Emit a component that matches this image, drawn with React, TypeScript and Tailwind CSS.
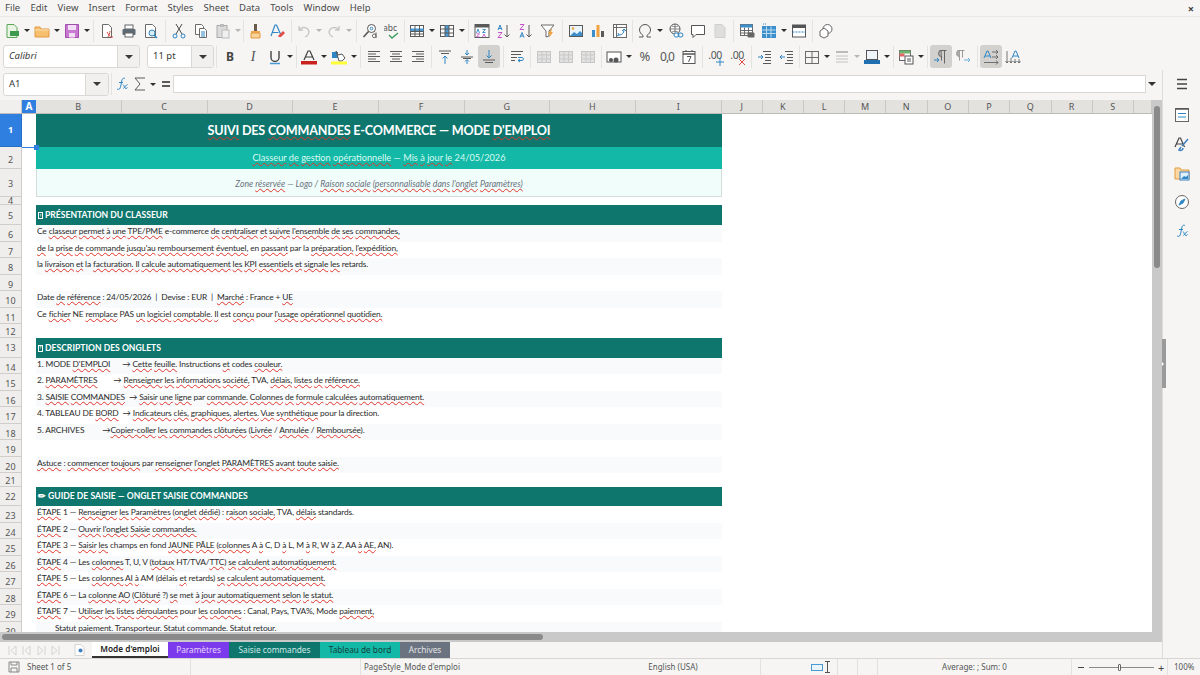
import React from "react";

const W = (s: string) => {
  const parts = s.split(/(\{[^}]*\})/g);
  return (
    <span className="whitespace-pre">
      {parts.map((p, i) =>
        p.startsWith("{") ? (
          <span key={i} className="underline decoration-wavy decoration-[#e0352b] decoration-[1px] [text-underline-offset:1px] [text-decoration-skip-ink:none]">
            {p.slice(1, -1)}
          </span>
        ) : (
          <React.Fragment key={i}>{p}</React.Fragment>
        )
      )}
    </span>
  );
};

const S = ({ children, active }: { children: React.ReactNode; active?: boolean }) => (
  <div className={"flex h-[23px] w-[22px] shrink-0 items-center justify-center rounded-[3px] " + (active ? "bg-[#d3d1cd]" : "")}>
    <svg width="16" height="16" viewBox="0 0 16 16" fill="none" strokeWidth="1">
      {children}
    </svg>
  </div>
);
const Arrow = ({ off }: { off?: boolean }) => (
  <div className="flex h-[23px] w-[8px] shrink-0 items-center justify-center">
    <div className={"h-0 w-0 border-x-[3px] border-t-[3px] border-x-transparent " + (off ? "border-t-[#b5b5b5]" : "border-t-[#2e2e2e]")} />
  </div>
);
const Sep = ({ w }: { w: string }) => (
  <div className={"flex h-[23px] shrink-0 items-center justify-center " + w}>
    <div className="h-[22px] w-px bg-[#e4e3e0]" />
  </div>
);
const G = "#5a5a5a";
const Lines = ({ rows }: { rows: [number, number][] }) => (
  <>
    {rows.map(([a, b], i) => (
      <path key={i} d={`M${a} ${2.5 + i * 2.5}H${b}`} stroke={G} />
    ))}
  </>
);
const Menu = () => (
  <div className="flex h-[17px] items-center border-b border-[#e9e8e5] pl-[5px] pr-[6px] text-[9.5px] text-[#4a4a4a]">
    <div className="flex gap-[10.2px]">
      {["File", "Edit", "View", "Insert", "Format", "Styles", "Sheet", "Data", "Tools", "Window", "Help"].map((m) => (
        <span key={m}>{m}</span>
      ))}
    </div>
    <span className="ml-auto text-[11px] font-bold leading-none text-[#444]">×</span>
  </div>
);

const Toolbar1 = () => (
  <div className="flex h-[26px] items-center pl-px pt-px">
    <S><path d="M3 1.5h7l3 3v10H3z" fill="#e9f4e3" stroke="#5da55a" /><rect x="6" y="8" width="9" height="5" fill="#3d9a4d" /></S>
    <Arrow />
    <S><path d="M1 4h5l1 2h8v8H1z" fill="#f7c06f" stroke="#e09b3f" /><path d="M1 7h14" stroke="#fbe0b5" /></S>
    <Arrow />
    <S><path d="M1.5 1.5h13v13h-13z" fill="#c77bd0" stroke="#a24dae" /><rect x="4" y="2" width="8" height="5" fill="#f3dff5" /><rect x="5" y="10" width="6" height="4.5" fill="#f3dff5" /></S>
    <Arrow />
    <Sep w="w-[5px]" />
    <S><path d="M3.5 1.5h6l3 3v10h-9z" fill="#fff" stroke="#6a6a6a" /><path d="M8 9c3 5 3 5 6 5M9 14c1-2 2-4 2-6" stroke="#d6493f" /></S>
    <S><rect x="4" y="2" width="8" height="4" fill="#fff" stroke="#666" /><rect x="1.5" y="6" width="13" height="6" rx="1" fill="#5e6a73" /><rect x="4" y="10" width="8" height="4" fill="#fff" stroke="#666" /></S>
    <S><path d="M2.5 1.5h7l3 3v10h-10z" fill="#fff" stroke="#6a6a6a" /><circle cx="9" cy="10" r="3" fill="#d9ecf7" stroke="#2f86c5" /><path d="M11 12l3 3" stroke="#2f86c5" strokeWidth="1.5" /></S>
    <Sep w="w-[6px]" />
    <S><path d="M5 1l6 10M11 1L5 11" stroke="#4b4b4b" /><circle cx="4" cy="13" r="2" stroke="#2f86c5" /><circle cx="12" cy="13" r="2" stroke="#2f86c5" /></S>
    <S><path d="M2.5 1.5h6l2 2v8h-8z" fill="#fff" stroke="#6a6a6a" /><path d="M6.5 5.5h5l2 2v7h-7z" fill="#fff" stroke="#6a6a6a" /><path d="M8 9h4M8 11h4M8 13h4" stroke="#2f86c5" /></S>
    <S><rect x="2" y="2.5" width="10" height="12" fill="#dcdcdc" stroke="#aaa" /><rect x="5" y="1" width="4" height="3" fill="#bbb" /><rect x="7" y="7" width="7" height="8" fill="#efefef" stroke="#bbb" /></S>
    <Arrow off />
    <Sep w="w-[3px]" />
    <S><rect x="6" y="1" width="3" height="7" fill="#6b5a4a" /><rect x="3" y="8" width="9" height="2" fill="#f0a94e" /><path d="M3 10h9v5H3z" fill="#f9d39a" stroke="#e39a3e" /></S>
    <S><path d="M1 13L5 2h1.500l4 9M2.500 9.500h6" stroke="#2f86c5" strokeWidth="1.200" /><path d="M8 13l5-5 2 2-4 4H9z" fill="#e14b45" /></S>
    <Sep w="w-[4px]" />
    <S><path d="M3 3v4h4M3 7c3-4 9-3 10 2 0 2-2 4-4 5" stroke="#c6c6c6" strokeWidth="1.3" /></S>
    <Arrow off />
    <S><path d="M13 3v4H9M13 7c-3-4-9-3-10 2 0 2 2 4 4 5" stroke="#c6c6c6" strokeWidth="1.3" /></S>
    <Arrow off />
    <Sep w="w-[6px]" />
    <S><circle cx="9.500" cy="5.500" r="4" fill="#fff" stroke="#555" /><path d="M6.500 8.500L1.500 14" stroke="#555" strokeWidth="1.600" /><circle cx="9.500" cy="5.500" r="1.300" stroke="#2f86c5" /><path d="M14 9.500V15M14 12.500a1.800 1.800 0 10-.1 1" stroke="#555" /></S>
    <S><text x="-1" y="8" fontSize="8.5" fill="#555" stroke="none" fontFamily="Noto Sans">abc</text><path d="M5 12l3 3 6-5" stroke="#3a9e5d" strokeWidth="1.3" /></S>
    <Sep w="w-[3px]" />
    <S><rect x="1.5" y="2.5" width="13" height="11" fill="#fff" stroke="#5a5a5a" /><rect x="1.5" y="5.5" width="13" height="3" fill="#4a9ad4" /><path d="M1.5 8.5h13M1.5 11h13M6 2.5v11M10.5 2.5v11" stroke="#5a5a5a" /></S>
    <Arrow />
    <S><rect x="1.5" y="2.5" width="13" height="11" fill="#fff" stroke="#5a5a5a" /><rect x="6" y="2.5" width="4" height="11" fill="#4a9ad4" /><path d="M1.5 6h13M1.5 10h13M6 2.5v11M10 2.5v11" stroke="#5a5a5a" /></S>
    <Arrow />
    <Sep w="w-[5px]" />
    <S><rect x="1" y="1.5" width="14" height="13" fill="#fff" stroke="#5a5a5a" /><rect x="1" y="1.5" width="14" height="3" fill="#5a5a5a" /><path d="M2.500 10l1.500-4 1.500 4M8.500 6.500h3l-3 3h3" stroke="#2f86c5" strokeWidth="0.9" /><path d="M2.500 10.800h3l-3 3h3M8.500 14l1.500-3 1.500 3" stroke="#c354c9" strokeWidth="0.9" /></S>
    <S><path d="M2 7l2-5 2 5M2.800 5.500h2.400" stroke="#2f86c5" /><path d="M2 9.500h4l-4 5h4" stroke="#c354c9" /><path d="M11 2v12M8.500 11.500L11 14l2.500-2.500" stroke="#5a5a5a" /></S>
    <S><path d="M2 1.500h4l-4 5h4" stroke="#c354c9" /><path d="M2 14.500l2-5 2 5M2.800 13h2.400" stroke="#2f86c5" /><path d="M11 2v12M8.500 11.500L11 14l2.500-2.500" stroke="#5a5a5a" /></S>
    <S><path d="M1 2h13L9 8v5l-3 1V8z" fill="#fff" stroke="#6a6a6a" /><path d="M11 6l-3 5h2l-1 4 4-6h-2l1-3z" fill="#f0a23e" /></S>
    <Sep w="w-[6px]" />
    <S><rect x="1.5" y="2.5" width="13" height="11" fill="#eaf4fb" stroke="#5a5a5a" /><circle cx="5" cy="5.5" r="1.3" fill="#f0a23e" /><path d="M2 13l4-4 3 2 3-3 2 2v3z" fill="#3d8fcc" /></S>
    <S><rect x="2" y="7" width="3" height="7" fill="#3d8fcc" /><rect x="6.5" y="2" width="3" height="12" fill="#f0a23e" /><rect x="11" y="8" width="3" height="6" fill="#5a5a5a" /></S>
    <S><rect x="1.5" y="1.5" width="13" height="13" fill="#fff" stroke="#6a6a6a" /><path d="M1.5 4.5h13M4.5 1.5v13" stroke="#6a6a6a" /><path d="M7 12c3 0 5-2 5-5M10 8l2-2 2 2M6 10l1 2-2 1" stroke="#2f86c5" /></S>
    <Sep w="w-[3px]" />
    <S><path d="M2 14h4v-1.5C4 11 2.5 9 2.5 7a5.500 5.500 0 0111 0c0 2-1.500 4-3.500 5.500V14h4" stroke="#555" /></S>
    <Arrow />
    <div className="w-px shrink-0" />
    <S><circle cx="7" cy="6" r="5" fill="#fff" stroke="#555" /><path d="M2 6h10M7 1v10M4 3c2 1 4 1 6 0M4 9c2-1 4-1 6 0" stroke="#555" strokeWidth="0.7" /><rect x="6" y="10" width="5" height="4" rx="2" fill="#fff" stroke="#2f86c5" /><rect x="10" y="10" width="5" height="4" rx="2" stroke="#2f86c5" /></S>
    <S><path d="M1.500 2.500h13v9H6l-3 3v-3H1.500z" fill="#fff" stroke="#555" /></S>
    <S><path d="M3 1.500h7l3 3v10H3z" fill="#dedede" stroke="#cfcfcf" /></S>
    <Sep w="w-[5px]" />
    <S><rect x="1.500" y="1.500" width="12" height="11" fill="#fff" stroke="#6a6a6a" /><rect x="1.500" y="1.500" width="12" height="3" fill="#3d8fcc" /><path d="M1.500 7.500h12M1.500 10h12M5.500 4.500v8M9.500 4.500v8" stroke="#6a6a6a" /><rect x="8.500" y="9.500" width="7" height="5" rx="1" fill="#666" /></S>
    <S><rect x="1.500" y="3.500" width="13" height="11" fill="#3d8fcc" stroke="#3d8fcc" /><path d="M1.500 7h13M1.500 10.500h13M5.500 3.500v11M10 3.500v11" stroke="#bcdcf2" /><path d="M2 1h3" stroke="#2f86c5" strokeDasharray="1 1" /></S>
    <Arrow />
    <S><rect x="1.500" y="2" width="13" height="12" fill="#fff" stroke="#555" /><rect x="1.500" y="2" width="13" height="3" fill="#555" /><path d="M1.500 9h13" stroke="#2f86c5" strokeDasharray="2 1" /></S>
    <Sep w="w-[5px]" />
    <S><circle cx="9.500" cy="6" r="4.500" fill="#fff" stroke="#666" /><path d="M2 8l4-3 4 3v5l-4 2-4-2z" fill="#fff" stroke="#666" /></S>
  </div>
);

const Combo = ({ w, a, italic, children }: { w: string; a: string; italic?: boolean; children: React.ReactNode }) => (
  <div className="flex h-[23px] shrink-0 overflow-hidden rounded-[3px] border border-[#d9d8d5] bg-white">
    <div className={"flex items-center pl-[5px] text-[9.5px] text-[#3a3a3a] " + w + (italic ? " italic" : "")}>{children}</div>
    <div className={"flex items-center justify-center border-l border-[#d9d8d5] bg-[#f1f0ee] " + a}>
      <div className="h-0 w-0 border-x-[4px] border-t-[4px] border-x-transparent border-t-[#3a3a3a]" />
    </div>
  </div>
);

const Toolbar2 = () => (
  <div className="flex h-[27px] items-center pl-[3px]">
    <Combo w="w-[113px]" a="w-[22px]" italic>Calibri</Combo>
    <div className="w-[7px] shrink-0" />
    <Combo w="w-[43px]" a="w-[22px]">11 pt</Combo>
    <Sep w="w-[5px]" />
    <div className="flex h-[23px] w-[22px] shrink-0 items-center justify-center text-[12px] font-bold leading-none text-[#444]">B</div>
    <div className="w-px shrink-0" />
    <div className="flex h-[23px] w-[22px] shrink-0 items-center justify-center font-['Liberation_Serif',serif] text-[14px] italic leading-none text-[#555]">I</div>
    <S><path d="M4 2v6.500a4 4 0 008 0V2" stroke="#444" strokeWidth="1.4" /><path d="M3 14.500h10" stroke="#4a9ad4" strokeWidth="1.500" /></S>
    <Arrow />
    <Sep w="w-[4px]" />
    <S><path d="M3 11l4-9h2l4 9M4.500 8h7" stroke="#3f3f3f" strokeWidth="1.200" /><rect x="0" y="12" width="16" height="3.500" fill="#c9211e" /></S>
    <Arrow />
    <S><path d="M1 3h6v6H1z" fill="#2f86c5" /><path d="M5 2l2 4 4-1 3 4-3 3H8z" fill="#fff" stroke="#555" /><rect x="0" y="12.500" width="16" height="3" fill="#ffff38" /></S>
    <Arrow />
    <Sep w="w-[5px]" />
    <S><Lines rows={[[2, 14], [2, 10], [2, 14], [2, 10], [2, 14]]} /></S>
    <S><Lines rows={[[2, 14], [4, 12], [2, 14], [4, 12], [2, 14]]} /></S>
    <S><Lines rows={[[2, 14], [6, 14], [2, 14], [6, 14], [2, 14]]} /></S>
    <Sep w="w-[5px]" />
    <S><path d="M2 2h12M4 4.500h8" stroke={G} /><path d="M8 15V7M5.500 9.500L8 7l2.500 2.500" stroke="#2f86c5" /></S>
    <S><path d="M2 8h12M4 9.500h8" stroke={G} /><path d="M8 1v5M6 4l2 2 2-2M8 15v-4M6 12.500l2-2 2 2" stroke="#2f86c5" /></S>
    <S active><path d="M8 1v8M5.500 6.500L8 9l2.500-2.500" stroke="#2f86c5" /><path d="M2 11h12M4 13.500h8" stroke={G} /></S>
    <Sep w="w-[6px]" />
    <S><path d="M2 2.500h12M2 5.500h10M2 8.500h6M2 11.500h4" stroke={G} /><path d="M9 8.500h4.500c1 0 1 3 0 3H9M11 10l-2 1.500 2 1.500" stroke="#2f86c5" /></S>
    <Sep w="w-[5px]" />
    {[0, 1, 2].map((i) => (
      <S key={i}><rect x="1.500" y="2.500" width="13" height="11" fill="#e2e2e2" stroke="#c6c6c6" /><path d="M1.500 6h13M1.500 10h13M6 2.500v11M10.500 2.500v11" stroke="#c9c9c9" /></S>
    ))}
    <Sep w="w-[4px]" />
    <S><rect x="1" y="3" width="14" height="10" fill="#fff" stroke="#555" /><circle cx="5" cy="11" r="2" fill="#555" /><circle cx="10" cy="11" r="2.500" fill="#555" /></S>
    <Arrow />
    <div className="w-px shrink-0" />
    <div className="flex h-[23px] w-[22px] shrink-0 items-center justify-center text-[13px] leading-none text-[#555]">%</div>
    <div className="flex h-[23px] w-[22px] shrink-0 items-center justify-center text-[12px] leading-none tracking-[-1px] text-[#555]">0,0</div>
    <S><rect x="2" y="2.500" width="12" height="12" fill="#fff" stroke="#555" /><path d="M2 5h12" stroke="#555" strokeWidth="1.500" /><path d="M5 1v2M11 1v2M6 7.500h4L7.500 13" stroke="#555" /></S>
    <Sep w="w-[4px]" />
    <div className="relative flex h-[23px] w-[22px] shrink-0 items-center justify-center pb-[2px] text-[10.5px] leading-none tracking-[-0.5px] text-[#555]"><span>.00</span><svg className="absolute right-[2px] top-[13px]" width="8" height="8" viewBox="0 0 8 8" fill="none" stroke="#2f86c5"><path d="M4 0v8M0 4h8" /></svg></div>
    <div className="relative flex h-[23px] w-[22px] shrink-0 items-center justify-center pb-[2px] text-[10.5px] leading-none tracking-[-0.5px] text-[#555]"><span>.00</span><svg className="absolute right-[2px] top-[13px]" width="8" height="8" viewBox="0 0 8 8" fill="none" stroke="#e14b45"><path d="M1 1l6 6M7 1L1 7" /></svg></div>
    <Sep w="w-[6px]" />
    <S><path d="M6 2.500h8M8 5.500h6M8 8.500h6M8 11.500h6M6 14.500h8" stroke={G} /><path d="M1 8h5M4 6l2 2-2 2" stroke="#2f86c5" /></S>
    <S><path d="M6 2.500h8M8 5.500h6M8 8.500h6M8 11.500h6M6 14.500h8" stroke={G} /><path d="M6 8H1M3 6L1 8l2 2" stroke="#2f86c5" /></S>
    <Sep w="w-[3px]" />
    <S><rect x="1.500" y="2.500" width="13" height="12" stroke="#6b6b6b" /><path d="M8 2.500v12M1.500 8.500h13" stroke="#6b6b6b" /></S>
    <Arrow />
    <S><path d="M2 3h12" stroke="#bbb" strokeWidth="2" /><path d="M2 7h12M2 10h12M2 13h12" stroke="#c2c2c2" /></S>
    <Arrow off />
    <S><rect x="2.500" y="1.500" width="11" height="9" fill="#eef4f9" stroke="#555" /><rect x="0" y="11" width="16" height="4" fill="#1f6fb2" /></S>
    <Arrow />
    <Sep w="w-[4px]" />
    <S><rect x="1.500" y="1.500" width="11" height="10" fill="#fff" stroke="#666" /><rect x="1.500" y="1.500" width="11" height="3" fill="#6cb36c" /><rect x="1.500" y="4.500" width="5" height="3" fill="#e06666" /><rect x="7" y="7" width="8" height="8" fill="#fff" stroke="#555" /><path d="M9 10h4M9 12h4" stroke="#555" /></S>
    <Arrow />
    <Sep w="w-[5px]" />
    <S active><path d="M6.500 1.500h7M8.500 1.500v10M11.500 1.500v13" stroke="#666" /><path d="M8.500 1.500a3 3 0 000 6" fill="#aaa" stroke="#666" /><path d="M1 11h5M4 9l2 2-2 2" stroke="#2f86c5" /></S>
    <S><path d="M2.500 1.500h7M4.500 1.500v10M7.500 1.500v7" stroke="#999" /><path d="M4.500 1.500a3 3 0 000 6" fill="#aaa" stroke="#999" /><path d="M9 11h6M13 9l2 2-2 2" stroke="#6fb2de" /></S>
    <Sep w="w-[6px]" />
    <S active><path d="M1 9l3-7h1l3 7M2 7h5" stroke="#2f86c5" /><path d="M9 3h6M13 1l2 2-2 2M9 8h6M13 6l2 2-2 2M1 13.500h14M13 11.500l2 2-2 2" stroke="#555" strokeWidth="0.8" /></S>
    <S><path d="M7 9l3-7h1l3 7M8 7h5" stroke="#2f86c5" /><path d="M2 2v12M.5 12L2 14l1.500-2M6 9v5M4.500 12L6 14l1.500-2M10 10v4M8.500 12l1.500 2 1.500-2M14 10v4M12.500 12l1.500 2 1.500-2" stroke="#555" strokeWidth="0.8" /></S>
  </div>
);

const FormulaBar = () => (
  <div className="flex h-[28px] shrink-0 items-center pl-[3px]">
    <Combo w="w-[81px]" a="w-[23px]">A1</Combo>
    <div className="ml-[2px] mr-[-1px] h-[22px] w-px bg-[#e4e3e0]" />
    <S><path d="M11 2.500C9 1.500 8 3 7.500 6c-.5 3-1 6-2 7-1 .8-2 .3-2.500-.2M5 6.500h4M9 8.500c1 .5 1.500 4 3 4 .8 0 1-.5 1.500-1M13.500 8.500c-1 0-3 3-4 4" stroke="#2f86c5" /></S>
    <div className="-ml-[4px]"><S><path d="M13 2H3l5 6-5 6h10" stroke="#5a5a5a" /></S></div>
    <div className="-ml-[2px]"><Arrow /></div>
    <div className="-ml-[2px] flex h-[23px] w-[22px] shrink-0 items-center justify-center"><div className="flex flex-col gap-[2px]"><div className="h-[2px] w-[8px] bg-[#5a5a5a]" /><div className="h-[2px] w-[8px] bg-[#5a5a5a]" /></div></div>
    <div className="-ml-[4px] h-[18px] w-[973px] shrink-0 border border-[#d9d8d5] bg-white" />
    <div className="flex w-[12px] shrink-0 justify-center"><div className="h-0 w-0 border-x-[4px] border-t-[4px] border-x-transparent border-t-[#333]" /></div>
  </div>
);

const cols: [string, string][] = [
  ["B", "w-[85.500px]"], ["C", "w-[86px]"], ["D", "w-[85px]"], ["E", "w-[86px]"], ["F", "w-[86px]"], ["G", "w-[85.500px]"], ["H", "w-[85.500px]"], ["I", "w-[86.500px]"],
  ["J", "w-[40.500px]"], ["K", "w-[41.500px]"], ["L", "w-[41px]"], ["M", "w-[41px]"], ["N", "w-[41.500px]"], ["O", "w-[41.500px]"], ["P", "w-[41px]"], ["Q", "w-[41.500px]"], ["R", "w-[41px]"], ["S", "w-[41.500px]"], ["", "w-[18px]"],
];

const ColHeader = () => (
  <div className="flex h-[14px] shrink-0 border-b border-[#bdbcb9] font-['Noto_Sans',sans-serif] text-[9px] text-[#555]">
    <div className="w-[22px] shrink-0 border-r border-[#c9c8c5] bg-[#f0efed]" />
    <div className="flex w-[14px] shrink-0 items-center justify-center bg-[#2f7fe0] text-[10px] font-bold text-white">A</div>
    {cols.map(([c, w]) => (
      <div key={c + w} className={"flex shrink-0 items-center justify-center border-r border-[#c9c8c5] bg-[#e3e2df] " + w}>{c}</div>
    ))}
  </div>
);

type R = { n: number; h: string; k?: "title" | "sub" | "zone" | "sec"; t?: string; g?: string; stripe?: boolean };
const rows: R[] = [
  { n: 1, h: "h-[33px]", k: "title", t: "{SUIVI} DES {COMMANDES} E-COMMERCE — MODE {D'EMPLOI}" },
  { n: 2, h: "h-[21.500px]", k: "sub", t: "{Classeur} {de} {gestion} {opérationnelle} — {Mis} {à} {jour} {le} 24/05/2026" },
  { n: 3, h: "h-[28px]", k: "zone", t: "Zone {réservée} — Logo / {Raison} {sociale} {(personnalisable} {dans} {l'onglet} {Paramètres)}" },
  { n: 4, h: "h-[8.500px]" },
  { n: 5, h: "h-[20px]", k: "sec", g: "?", t: "PRÉSENTATION DU CLASSEUR" },
  { n: 6, h: "h-[16.500px]", stripe: true, t: "Ce {classeur} {permet} {à} {une} {TPE/PME} e-commerce {de} {centraliser} {et} {suivre} {l'ensemble} {de} {ses} {commandes,}" },
  { n: 7, h: "h-[16.500px]", t: "{de} la {prise} {de} {commande} {jusqu'au} {remboursement} {éventuel,} en {passant} par la {préparation,} {l'expédition,}" },
  { n: 8, h: "h-[16.500px]", stripe: true, t: "la {livraison} {et} la {facturation.} {Il} {calcule} {automatiquement} {les} {KPI} {essentiels} {et} {signale} {les} retards." },
  { n: 9, h: "h-[16.500px]" },
  { n: 10, h: "h-[16.500px]", stripe: true, t: "Date {de} {référence} : 24/05/2026  |  Devise : EUR  |  {Marché} : France + {UE}" },
  { n: 11, h: "h-[16.500px]", t: "Ce {fichier} NE {remplace} PAS {un} {logiciel} {comptable.} {Il} est {conçu} pour {l'usage} {opérationnel} {quotidien.}" },
  { n: 12, h: "h-[13.500px]" },
  { n: 13, h: "h-[20px]", k: "sec", g: "?", t: "DESCRIPTION DES ONGLETS" },
  { n: 14, h: "h-[16.500px]", stripe: true, t: "1. MODE {D'EMPLOI}      → {Cette} {feuille.} Instructions {et} codes {couleur.}" },
  { n: 15, h: "h-[16.500px]", t: "2. {PARAMÈTRES}        → {Renseigner} {les} {informations} {société,} TVA, {délais,} {listes} {de} {référence.}" },
  { n: 16, h: "h-[16.500px]", stripe: true, t: "3. {SAISIE} {COMMANDES}  → {Saisir} {une} {ligne} par {commande.} {Colonnes} {de} {formule} {calculées} {automatiquement.}" },
  { n: 17, h: "h-[16.500px]", t: "4. TABLEAU DE {BORD}  → {Indicateurs} {clés,} {graphiques,} {alertes.} {Vue} {synthétique} pour la direction." },
  { n: 18, h: "h-[16.500px]", stripe: true, t: "5. ARCHIVES         →{Copier-coller} {les} {commandes} {clôturées} ({Livrée} / {Annulée} / {Remboursée})." },
  { n: 19, h: "h-[16.500px]" },
  { n: 20, h: "h-[16.500px]", stripe: true, t: "{Astuce} : {commencer} {toujours} par {renseigner} {l'onglet} {PARAMÈTRES} {avant} {toute} {saisie.}" },
  { n: 21, h: "h-[13.500px]" },
  { n: 22, h: "h-[19.500px]", k: "sec", t: "✏ GUIDE DE SAISIE — ONGLET SAISIE COMMANDES" },
  { n: 23, h: "h-[16.500px]", t: "{ÉTAPE} 1 — {Renseigner} {les} {Paramètres} ({onglet} {dédié}) : {raison} {sociale,} TVA, {délais} standards." },
  { n: 24, h: "h-[16.500px]", stripe: true, t: "{ÉTAPE} 2 — {Ouvrir} {l'onglet} {Saisie} {commandes.}" },
  { n: 25, h: "h-[16.500px]", t: "{ÉTAPE} 3 — {Saisir} {les} champs en fond {JAUNE} {PÂLE} ({colonnes} A {à} C, D {à} L, M {à} R, W {à} Z, AA {à} {AE,} AN)." },
  { n: 26, h: "h-[16.500px]", stripe: true, t: "{ÉTAPE} 4 — Les {colonnes} T, U, V ({totaux} HT/TVA/{TTC}) {se} {calculent} {automatiquement.}" },
  { n: 27, h: "h-[16.500px]", t: "{ÉTAPE} 5 — Les {colonnes} {AI} {à} AM (délais {et} retards) {se} {calculent} {automatiquement.}" },
  { n: 28, h: "h-[16.500px]", stripe: true, t: "{ÉTAPE} 6 — La {colonne} {AO} ({Clôturé} ?) {se} met {à} {jour} {automatiquement} {selon} {le} {statut.}" },
  { n: 29, h: "h-[16.500px]", t: "{ÉTAPE} 7 — {Utiliser} {les} {listes} {déroulantes} pour {les} {colonnes} : Canal, Pays, TVA%, Mode {paiement,}" },
  { n: 30, h: "h-[16.500px]", stripe: true, t: "         {Statut} {paiement.} {Transporteur.} {Statut} {commande.} {Statut} {retour.}" },
];

const Cell = ({ r }: { r: R }) => {
  if (r.k === "title")
    return <div className="flex h-full items-center justify-center bg-[#0f766e] pt-px text-[12.6px] font-bold tracking-[-0.2px] text-white">{W(r.t!)}</div>;
  if (r.k === "sub")
    return <div className="flex h-full items-center justify-center bg-[#14b8a6] pt-px text-[9.2px] text-[#d9fbf3]">{W(r.t!)}</div>;
  if (r.k === "zone")
    return <div className="flex h-full items-center justify-center border border-t-0 border-[#d6dcdc] bg-[#f0fdfa] pt-[3px] text-[8.7px] italic text-[#6b7280]">{W(r.t!)}</div>;
  if (r.k === "sec")
    return (
      <div className="flex h-full items-center bg-[#0f766e] pl-[2px] pt-px text-[8.6px] font-bold text-white">
        {r.g ? <span className="mr-[2px] flex h-[7px] w-[5px] items-center justify-center border border-white text-[4px] leading-none">{r.g}</span> : null}
        {W(r.t!)}
      </div>
    );
  return (
    <div className={"flex h-full items-start pl-[1px] text-[8.4px] leading-[13px] tracking-[-0.15px] text-[#2b2b2b] " + (r.stripe ? "bg-[#f8fafc]" : "bg-white")}>
      {r.t ? W(r.t) : null}
    </div>
  );
};

const labelPad = (r: R) => {
  if (r.n === 1 || r.n === 4) return "";
  if (r.k === "sec" || r.n === 12 || r.n === 21) return "pt-[2px]";
  return "pt-[4px]";
};

const Sheet = () => (
  <div className="relative flex min-h-0 min-w-0 flex-1 flex-col overflow-hidden">
    <ColHeader />
    <div className="flex flex-1 flex-col overflow-hidden bg-white font-['Lato',sans-serif]">
      {rows.map((r) => (
        <div key={r.n} className={"flex shrink-0 " + r.h}>
          <div className={"flex w-[22px] shrink-0 items-center justify-center border-b border-r font-['Noto_Sans',sans-serif] text-[9px] " + labelPad(r) + (r.n === 1 ? " border-[#2a6fc5] bg-[#2f7fe0] font-bold text-white" : " border-[#cfcecb] bg-[#efeeec] text-[#555]")}>
            {r.n}
          </div>
          <div className="w-[14px] shrink-0 bg-white" />
          <div className="w-[686px] shrink-0 overflow-hidden"><Cell r={r} /></div>
        </div>
      ))}
    </div>
    <div className="absolute left-[22px] top-[46.500px] h-px w-[14px] bg-[#2f7fe0]" />
    <div className="absolute left-[33.500px] top-[44.500px] h-[5px] w-[5px] bg-[#2f7fe0]" />
  </div>
);

const TabBar = () => (
  <div className="flex h-[16px] shrink-0 items-stretch text-[8.25px]">
    <div className="flex w-[66px] shrink-0 items-center gap-[2px] pl-[7px]">
      {[0, 1, 2, 3].map((i) => (
        <svg key={i} width="12" height="11" viewBox="0 0 12 11" fill="none" stroke="#d4d3d0">
          {i < 2 ? <path d="M9 1L4 5.500l5 4.500zM2 1v9" /> : <path d="M3 1l5 4.500L3 10zM10 1v9" />}
        </svg>
      ))}
    </div>
    <div className="flex w-[26px] shrink-0 items-center justify-center">
      <svg width="11" height="12" viewBox="0 0 11 12" fill="none"><path d="M1 .5h6l3 3v8H1z" fill="#fff" stroke="#d4d3d0" /><circle cx="6.500" cy="6.500" r="2" fill="#3d7fbf" /></svg>
    </div>
    <div className="flex w-[76px] shrink-0 items-center justify-center border-b-2 border-[#333] bg-white font-semibold text-[#222]">Mode d'emploi</div>
    <div className="flex w-[61px] shrink-0 items-center justify-center bg-[#7c3aed] text-[#e6d8fb]">Paramètres</div>
    <div className="flex w-[91px] shrink-0 items-center justify-center bg-[#0f766e] text-[#cdeae6]">Saisie commandes</div>
    <div className="flex w-[80px] shrink-0 items-center justify-center bg-[#14b8a6] text-[#11403b]">Tableau de bord</div>
    <div className="flex w-[50px] shrink-0 items-center justify-center bg-[#6b7280] text-[#e3e5e8]">Archives</div>
  </div>
);

const Status = () => (
  <div className="flex h-[17px] shrink-0 items-center border-t border-[#d7d6d3] text-[8px] text-[#555]">
    <div className="flex w-[27px] shrink-0 justify-center">
      <svg width="12" height="12" viewBox="0 0 12 12" fill="none" stroke="#888"><path d="M1 1h10v10H1zM3 1v3h6V1M3 11V7h6v4" /></svg>
    </div>
    <div className="w-[163px] shrink-0">Sheet 1 of 5</div>
    <div className="h-full w-[170px] shrink-0 border-l border-[#e2e1de]" />
    <div className="flex h-full w-[253px] shrink-0 items-center border-l border-[#e2e1de] pl-[3px]">PageStyle_Mode d'emploi</div>
    <div className="w-[147px] shrink-0 pr-[27px] text-center">English (USA)</div>
    <div className="flex h-full w-[77px] shrink-0 items-center justify-end gap-[2px] border-l border-[#e2e1de] pr-[7px]">
      <div className="h-[7px] w-[12px] border border-[#4a9ad4] bg-[#e9f3fa]" />
      <svg width="5" height="12" viewBox="0 0 5 12" fill="none" stroke="#555"><path d="M0 .5h5M0 11.500h5M2.500 .5v11" /></svg>
    </div>
    <div className="h-full w-[20px] shrink-0 border-l border-[#e2e1de]" />
    <div className="h-full w-[20px] shrink-0 border-l border-[#e2e1de]" />
    <div className="flex h-full w-[194px] shrink-0 items-center justify-center border-l border-[#e2e1de]">Average: ; Sum: 0</div>
    <div className="flex h-full w-[96px] shrink-0 items-center gap-[3px] border-l border-[#e2e1de] pl-[6px] text-[#444]">
      <div className="h-px w-[6px] bg-[#444]" />
      <div className="relative ml-[2px] h-px w-[65px] bg-[#8a8a8a]">
        <div className="absolute left-[29px] top-[-3px] h-[7px] w-[3px] rounded-[1px] border border-[#666] bg-white" />
      </div>
      <span className="ml-[1px] text-[11px] leading-none">+</span>
    </div>
    <div className="flex h-full w-[33px] shrink-0 items-center border-l border-[#e2e1de] pl-[6px]">100%</div>
  </div>
);

const Deck = () => (
  <div className="relative flex w-[38px] shrink-0 flex-col items-center border-l border-[#dddcd9] pt-[6px]">
    <svg width="16" height="16" viewBox="0 0 16 16" fill="none" stroke="#444" strokeWidth="1.300"><path d="M3 3.500h10M3 8h10M3 12.500h10" /></svg>
    <div className="mt-[15px] flex flex-col items-center gap-[13px]">
      <svg width="16" height="16" viewBox="0 0 16 16" fill="none"><rect x="1.500" y="1.500" width="13" height="13" fill="#fff" stroke="#666" /><path d="M1.500 2h13" stroke="#555" strokeWidth="1.500" /><path d="M4 6.500h8M4 10h8" stroke="#2f86c5" /></svg>
      <svg width="16" height="16" viewBox="0 0 16 16" fill="none"><path d="M1 11l4-9h1.500l4 9M2.500 8h6" stroke="#444" strokeWidth="1.200" /><path d="M14 3L8 10M7 11l-2 3c2 1 4 0 4-2" stroke="#3d7fbf" strokeWidth="1.500" /></svg>
      <svg width="16" height="16" viewBox="0 0 16 16" fill="none"><path d="M1 3h5l1 2h8v9H1z" fill="#fbd8a4" stroke="#e39a3e" /><rect x="6" y="7" width="9" height="8" fill="#dff0fa" stroke="#3d7fbf" /><path d="M7 14l3-3 2 1 2-2v4z" fill="#2f86c5" /></svg>
      <svg width="16" height="16" viewBox="0 0 16 16" fill="none"><circle cx="8" cy="8" r="6.500" fill="#fff" stroke="#666" /><path d="M11 5L9 9 5 11l2-4z" fill="#2f86c5" stroke="#2f86c5" /></svg>
      <svg width="16" height="16" viewBox="0 0 16 16" fill="none"><path d="M11 2.500C9 1.500 8 3 7.500 6c-.5 3-1 6-2 7-1 .8-2 .3-2.500-.2M5 6.500h4M9 8.500c1 .5 1.500 4 3 4 .8 0 1-.5 1.500-1M13.500 8.500c-1 0-3 3-4 4" stroke="#2f86c5" /></svg>
    </div>
    <div className="absolute left-[-1px] top-[269px] flex h-[49px] w-[4px] items-center bg-[#9a9a9a]"><div className="h-0 w-0 border-y-[2px] border-l-[2px] border-y-transparent border-l-white" /></div>
  </div>
);

export default function App() {
  return (
    <div className="flex h-[675px] w-[1200px] flex-col overflow-hidden bg-[#f6f5f4] font-['Noto_Sans',sans-serif]">
      <Menu />
      <Toolbar1 />
      <Toolbar2 />
      <div className="flex min-h-0 flex-1">
        <div className="flex min-w-0 flex-1 flex-col">
          <FormulaBar />
          <div className="h-[2px] shrink-0" />
          <div className="flex min-h-0 flex-1">
            <Sheet />
            <div className="flex w-[10px] shrink-0 justify-center bg-[#c9c9c9] pt-[6px]">
              <div className="h-[162px] w-[6px] rounded-[3px] bg-[#8a8a8a]" />
            </div>
          </div>
          <div className="flex h-[10px] shrink-0 items-center bg-[#c9c9c9] pl-[2px]">
            <div className="h-[6px] w-[541px] rounded-[3px] bg-[#8a8a8a]" />
          </div>
          <TabBar />
        </div>
        <Deck />
      </div>
      <Status />
    </div>
  );
}
